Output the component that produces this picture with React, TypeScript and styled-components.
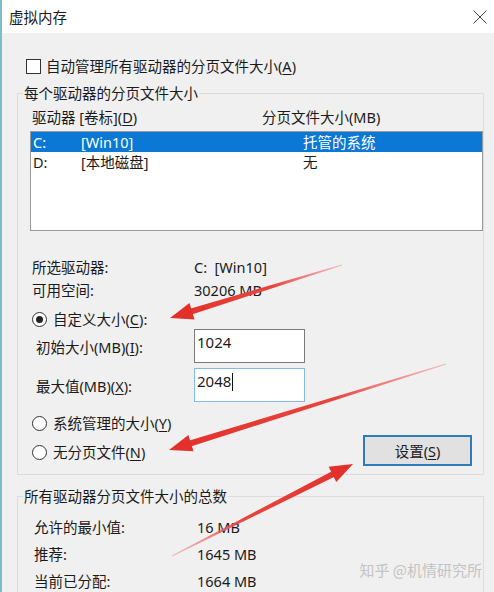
import React from 'react';
import styled, { createGlobalStyle } from 'styled-components';

const Global = createGlobalStyle`
  html, body { margin: 0; padding: 0; background: #f0f0f0; }
  body {
    font-family: "Noto Sans", "Noto Sans CJK SC", sans-serif;
    font-size: 14.5px;
    color: #1b1b1b;
  }
  u { text-underline-offset: 2px; text-decoration-thickness: 1px; }
`;

const Window = styled.div`
  position: relative;
  width: 494px;
  height: 592px;
  overflow: hidden;
  box-sizing: border-box;
  border-left: 2px solid #7fbccb;
  display: flex;
  flex-direction: column;
  background: #f0f0f0;
`;

const TitleBar = styled.div`
  flex: none;
  height: 33px;
  background: #ffffff;
  display: flex;
  align-items: center;
  justify-content: space-between;
  padding: 0 7px 0 7px;
`;

const Title = styled.span`
  line-height: 20px;
  font-family: "Noto Sans CJK SC", sans-serif;
`;

const Body = styled.div`
  flex: 1;
  padding: 23px 10px 0 15px;
  display: flex;
  flex-direction: column;
`;

const CheckRow = styled.div`
  display: flex;
  align-items: center;
  gap: 5px;
  height: 20px;
  line-height: 20px;
  margin-left: 9px;
`;

const CheckBox = styled.span`
  width: 15px;
  height: 15px;
  box-sizing: border-box;
  border: 1px solid #333;
  background: #fff;
`;

const Group = styled.fieldset<{ $mt: number }>`
  margin: ${(p) => p.$mt}px 0 0 0;
  padding: 0;
  min-width: 0;
  border: 1px solid #dcdcdc;
`;

const Legend = styled.legend`
  margin-left: 5px;
  padding: 0 1px;
  line-height: 20px;
`;

const GroupInner = styled.div<{ $pt: number; $pb: number; $pl: number }>`
  padding: ${(p) => p.$pt}px 0 ${(p) => p.$pb}px ${(p) => p.$pl}px;
  display: flex;
  flex-direction: column;
`;

const Header = styled.div`
  display: grid;
  grid-template-columns: 230px 1fr;
  padding-left: 2px;
  line-height: 20px;
`;

const ListBox = styled.div`
  margin-top: 4px;
  height: 100px;
  box-sizing: border-box;
  border: 1px solid #9a9a9a;
  background: #ffffff;
`;

const ListRow = styled.div<{ $sel?: boolean }>`
  display: grid;
  grid-template-columns: 48px 222px 1fr;
  padding-left: 2px;
  height: 20px;
  line-height: 20px;
  background: ${(p) => (p.$sel ? '#0a78d4' : 'transparent')};
  color: ${(p) => (p.$sel ? '#ffffff' : '#1b1b1b')};
`;

const InfoGrid = styled.div<{ $mt: number; $col: number; $lh: number; $pl: number }>`
  margin-top: ${(p) => p.$mt}px;
  display: grid;
  grid-template-columns: ${(p) => p.$col}px 1fr;
  padding-left: ${(p) => p.$pl}px;
  line-height: ${(p) => p.$lh}px;
`;

const RadioRow = styled.div<{ $mt?: number }>`
  display: flex;
  align-items: center;
  gap: 6px;
  padding-left: 2px;
  height: 20px;
  line-height: 20px;
  margin-top: ${(p) => p.$mt ?? 0}px;
`;

const RadioCircle = styled.span<{ $on?: boolean }>`
  width: 15px;
  height: 15px;
  box-sizing: border-box;
  border-radius: 50%;
  border: 1px solid #333;
  background: #fff;
  display: flex;
  align-items: center;
  justify-content: center;
  &::after {
    content: '';
    width: 7px;
    height: 7px;
    border-radius: 50%;
    background: ${(p) => (p.$on ? '#222' : 'transparent')};
  }
`;

const FieldRow = styled.div<{ $mt: number }>`
  display: grid;
  grid-template-columns: 164px 111px;
  align-items: center;
  margin-top: ${(p) => p.$mt}px;
`;

const FieldLabel = styled.span`
  padding-left: 6px;
  padding-top: 2px;
  line-height: 20px;
`;

const Input = styled.div<{ $focus?: boolean }>`
  height: 34px;
  box-sizing: border-box;
  border: 1px solid ${(p) => (p.$focus ? '#86b9e6' : '#7a7a7a')};
  background: #fff;
  padding: 2px 0 0 2px;
  line-height: 20px;
  font-size: 15px;
`;

const Caret = styled.span`
  display: inline-block;
  width: 1px;
  height: 18px;
  background: #111;
  vertical-align: -4px;
  margin-left: 1px;
`;

const BottomRow = styled.div`
  display: flex;
  align-items: center;
  justify-content: space-between;
  margin-top: 2px;
  height: 31px;
  padding-right: 11px;
`;

const RadioWrap = styled.div`
  padding-top: 3px;
`;

const Button = styled.button`
  width: 109px;
  height: 31px;
  box-sizing: border-box;
  border: 2px solid #2f7cb8;
  background: #e1e1e1;
  font: inherit;
  color: #1b1b1b;
  line-height: 20px;
  padding: 0;
`;

const Watermark = styled.div`
  position: absolute;
  right: 12px;
  top: 560px;
  color: #c3c3c3;
  font-size: 15px;
  line-height: 20px;
  font-family: "Noto Sans CJK SC", sans-serif;
`;

const Overlay = styled.svg`
  position: absolute;
  left: -2px;
  top: 0;
  pointer-events: none;
`;

type Pt = [number, number];

function arrowShapes(t: Pt, p: Pt, L = 23, W = 8.5, w0 = 0.5, w1 = 3.2) {
  const dx = p[0] - t[0];
  const dy = p[1] - t[1];
  const len = Math.hypot(dx, dy);
  const ux = dx / len;
  const uy = dy / len;
  const nx = -uy;
  const ny = ux;
  const b: Pt = [p[0] - ux * L, p[1] - uy * L];
  const s: Pt = [p[0] - ux * L * 0.6, p[1] - uy * L * 0.6];
  const f = (x: number, y: number) => `${x.toFixed(1)},${y.toFixed(1)}`;
  const shaft = [
    f(t[0] + nx * w0, t[1] + ny * w0),
    f(s[0] + nx * w1, s[1] + ny * w1),
    f(s[0] - nx * w1, s[1] - ny * w1),
    f(t[0] - nx * w0, t[1] - ny * w0),
  ].join(' ');
  const head = [f(p[0], p[1]), f(b[0] + nx * W, b[1] + ny * W), f(b[0] - nx * W, b[1] - ny * W)].join(' ');
  return { shaft, head };
}

const ARROWS: { id: string; t: Pt; p: Pt }[] = [
  { id: 'a1', t: [342, 265], p: [170, 318] },
  { id: 'a2', t: [446, 364], p: [169, 450] },
  { id: 'a3', t: [172, 556], p: [353, 464] },
];

const Arrows: React.FC = () => (
  <Overlay width={494} height={592} viewBox="0 0 494 592">
    <defs>
      {ARROWS.map((a) => (
        <linearGradient key={a.id} id={a.id} gradientUnits="userSpaceOnUse" x1={a.t[0]} y1={a.t[1]} x2={a.p[0]} y2={a.p[1]}>
          <stop offset="0" stopColor="#f08e8e" stopOpacity="0.55" />
          <stop offset="0.4" stopColor="#e8453f" />
          <stop offset="1" stopColor="#e3302b" />
        </linearGradient>
      ))}
    </defs>
    {ARROWS.map((a) => {
      const s = arrowShapes(a.t, a.p);
      return (
        <g key={a.id}>
          <polygon points={s.shaft} fill={`url(#${a.id})`} />
          <polygon points={s.head} fill="#e3302b" />
        </g>
      );
    })}
  </Overlay>
);

const CloseIcon: React.FC = () => (
  <svg width="14" height="14" viewBox="0 0 14 14">
    <path d="M0.5 0.5 L13.5 13.5 M13.5 0.5 L0.5 13.5" stroke="#444" strokeWidth="1" fill="none" />
  </svg>
);

export default function App() {
  return (
    <>
      <Global />
      <Window>
        <TitleBar>
          <Title>虚拟内存</Title>
          <CloseIcon />
        </TitleBar>
        <Body>
          <CheckRow>
            <CheckBox />
            <span>
              自动管理所有驱动器的分页文件大小(<u>A</u>)
            </span>
          </CheckRow>

          <Group $mt={7}>
            <Legend>每个驱动器的分页文件大小</Legend>
            <GroupInner $pt={4} $pb={8} $pl={12}>
              <Header>
                <span>
                  驱动器 [卷标](<u>D</u>)
                </span>
                <span>分页文件大小(MB)</span>
              </Header>
              <ListBox>
                <ListRow $sel>
                  <span>C:</span>
                  <span>[Win10]</span>
                  <span>托管的系统</span>
                </ListRow>
                <ListRow>
                  <span>D:</span>
                  <span>[本地磁盘]</span>
                  <span>无</span>
                </ListRow>
              </ListBox>

              <InfoGrid $mt={25} $col={162} $lh={23} $pl={2}>
                <span>所选驱动器:</span>
                <span>C:&nbsp; [Win10]</span>
                <span>可用空间:</span>
                <span>30206 MB</span>
              </InfoGrid>

              <RadioRow $mt={7}>
                <RadioCircle $on />
                <span>
                  自定义大小(<u>C</u>):
                </span>
              </RadioRow>

              <FieldRow $mt={0}>
                <FieldLabel>
                  初始大小(MB)(<u>I</u>):
                </FieldLabel>
                <Input>1024</Input>
              </FieldRow>
              <FieldRow $mt={5}>
                <FieldLabel>
                  最大值(MB)(<u>X</u>):
                </FieldLabel>
                <Input $focus>
                  2048
                  <Caret />
                </Input>
              </FieldRow>

              <RadioRow $mt={11}>
                <RadioCircle />
                <span>
                  系统管理的大小(<u>Y</u>)
                </span>
              </RadioRow>

              <BottomRow>
                <RadioWrap>
                  <RadioRow>
                    <RadioCircle />
                    <span>
                      无分页文件(<u>N</u>)
                    </span>
                  </RadioRow>
                </RadioWrap>
                <Button>
                  设置(<u>S</u>)
                </Button>
              </BottomRow>
            </GroupInner>
          </Group>

          <Group $mt={11}>
            <Legend>所有驱动器分页文件大小的总数</Legend>
            <GroupInner $pt={8} $pb={0} $pl={16}>
              <InfoGrid $mt={0} $col={163} $lh={27} $pl={0}>
                <span>允许的最小值:</span>
                <span>16 MB</span>
                <span>推荐:</span>
                <span>1645 MB</span>
                <span>当前已分配:</span>
                <span>1664 MB</span>
              </InfoGrid>
            </GroupInner>
          </Group>
        </Body>
        <Watermark>知乎 @机情研究所</Watermark>
        <Arrows />
      </Window>
    </>
  );
}
